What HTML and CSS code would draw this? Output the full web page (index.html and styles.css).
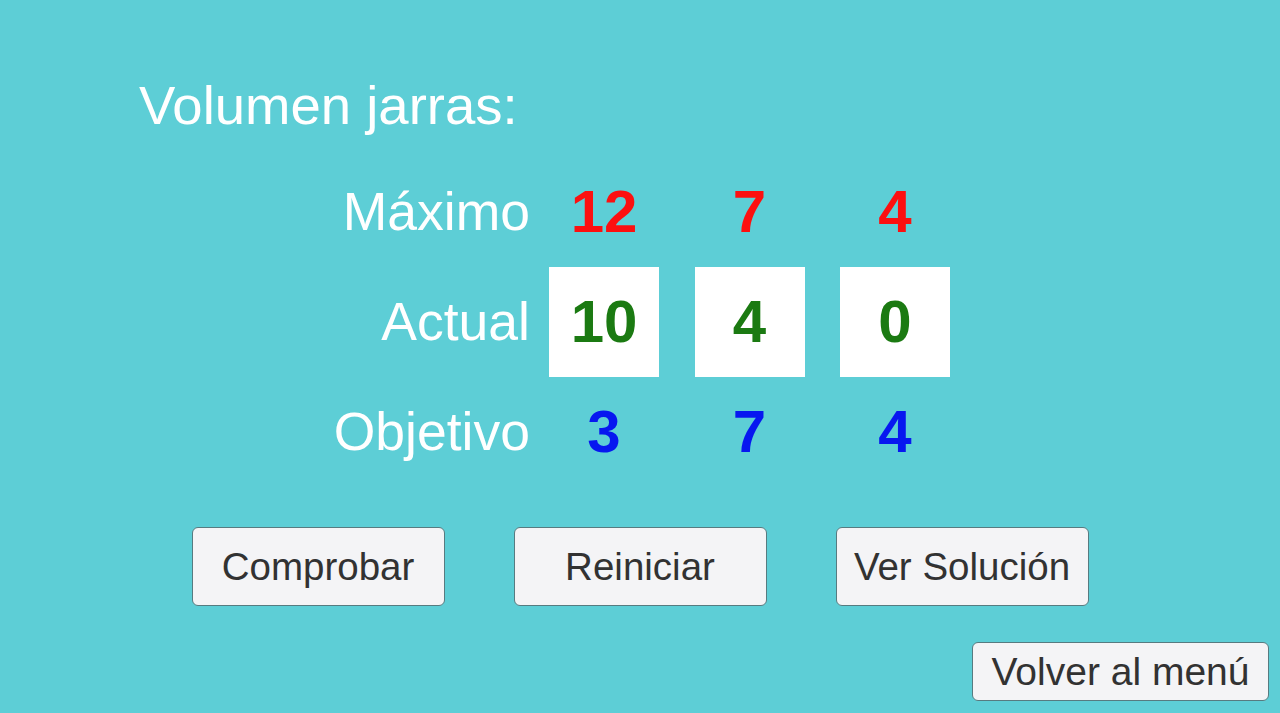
FILE: index.html
```html
<!DOCTYPE html>
<html lang="es">
<head>
<meta charset="utf-8">
<title>Volumen jarras</title>
<link rel="stylesheet" href="styles.css">
</head>
<body>
<div class="page">
  <h1 class="title">Volumen jarras:</h1>
  <div class="board">
    <div class="row">
      <div class="label">Máximo</div>
      <div class="cells">
        <div class="cell max">12</div>
        <div class="cell max">7</div>
        <div class="cell max">4</div>
      </div>
    </div>
    <div class="row">
      <div class="label">Actual</div>
      <div class="cells">
        <div class="cell box cur">10</div>
        <div class="cell box cur">4</div>
        <div class="cell box cur">0</div>
      </div>
    </div>
    <div class="row">
      <div class="label">Objetivo</div>
      <div class="cells">
        <div class="cell goal">3</div>
        <div class="cell goal">7</div>
        <div class="cell goal">4</div>
      </div>
    </div>
  </div>
  <div class="actions">
    <button class="btn">Comprobar</button>
    <button class="btn">Reiniciar</button>
    <button class="btn">Ver Solución</button>
  </div>
  <div class="footer">
    <button class="btn btn-back">Volver al menú</button>
  </div>
</div>
</body>
</html>
```
FILE: styles.css
```css
html, body {
  margin: 0;
  padding: 0;
}
body {
  background: #5dced6;
  font-family: "Liberation Sans", Arial, sans-serif;
  width: 1280px;
  height: 713px;
  overflow: hidden;
}
.page {
  padding-top: 79px;
  display: flex;
  flex-direction: column;
}
.title {
  margin: 0 0 24px 0;
  padding-left: 139px;
  font-size: 54.5px;
  line-height: 54px;
  font-weight: normal;
  color: #ffffff;
}
.board {
  display: flex;
  flex-direction: column;
  margin-left: 309px;
}
.row {
  display: flex;
  align-items: center;
  height: 110px;
}
.label {
  width: 221px;
  margin-right: 19px;
  text-align: right;
  font-size: 53.5px;
  line-height: 1;
  color: #ffffff;
}
.cells {
  display: flex;
  gap: 35.5px;
}
.cell {
  width: 110px;
  height: 110px;
  display: flex;
  align-items: center;
  justify-content: center;
  font-size: 60px;
  font-weight: bold;
  line-height: 1;
}
.box {
  background: #ffffff;
}
.max {
  color: #fc1010;
}
.cur {
  color: #1b7a12;
}
.goal {
  color: #0717f0;
}
.actions {
  display: flex;
  justify-content: center;
  gap: 69px;
  margin-top: 40px;
}
.btn {
  box-sizing: border-box;
  width: 253px;
  height: 79px;
  background: #f4f4f6;
  border: 1px solid #577b80;
  border-radius: 6px;
  font-family: "Liberation Sans", Arial, sans-serif;
  font-size: 38.5px;
  color: #323232;
  padding: 0;
}
.footer {
  display: flex;
  justify-content: flex-end;
  margin-top: 36px;
  padding-right: 11px;
}
.btn-back {
  width: 297px;
  height: 59px;
  font-size: 39px;
}
```
